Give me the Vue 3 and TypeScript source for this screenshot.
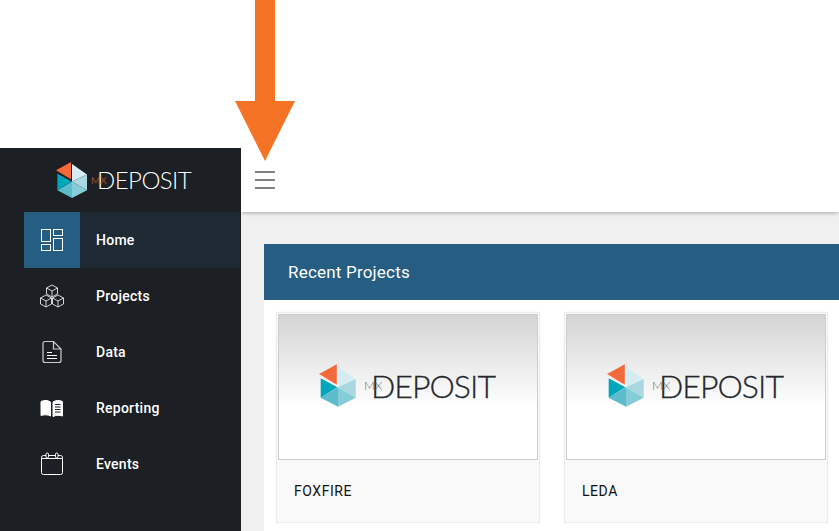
<script setup lang="ts">
const navItems = [
  { label: 'Home', icon: 'home', active: true },
  { label: 'Projects', icon: 'projects', active: false },
  { label: 'Data', icon: 'data', active: false },
  { label: 'Reporting', icon: 'reporting', active: false },
  { label: 'Events', icon: 'events', active: false },
]

const projects = ['FOXFIRE', 'LEDA']
</script>

<template>
  <div class="page">
    <svg class="arrow" width="60" height="161" viewBox="0 0 60 161">
      <path d="M20 0h20v101h20L30 161 0 101h20z" fill="#f47324" />
    </svg>

    <div class="top-space"></div>

    <div class="shell">
      <aside class="sidebar">
        <div class="brand">
          <svg class="hex" width="32" height="38" viewBox="0 0 32 38">
            <path d="M16 3l15 10.500-15 7z" fill="#d3edf2" />
            <path d="M31 13.500v15.800l-15-8.800z" fill="#a9d8e0" />
            <path d="M31 29.300L16 37V20.500z" fill="#85cdd8" />
            <path d="M1.400 29.300L16 37V20.500z" fill="#5cbccb" />
            <path d="M1.400 12.800v16.500L15.500 20.500z" fill="#00a6bb" />
            <path d="M0 9.200L15 1v17.300z" fill="#f4693a" />
          </svg>
          <span class="wordmark">
            <span class="mx mx-dark">MX</span>DEPOSIT
          </span>
        </div>

        <nav class="nav">
          <a v-for="item in navItems" :key="item.label" class="nav-item" :class="{ active: item.active }">
            <span class="nav-icon">
              <svg width="26" height="26" viewBox="0 0 26 26" fill="none" stroke="#fff" stroke-width="1">
                <template v-if="item.icon === 'home'">
                  <rect x="2.500" y="2.500" width="9" height="12" />
                  <rect x="14.500" y="2.500" width="9" height="6" />
                  <rect x="14.500" y="11.500" width="9" height="12" />
                  <rect x="2.500" y="17.500" width="9" height="6" />
                </template>
                <template v-else-if="item.icon === 'projects'">
                  <g stroke-width="0.800">
                    <path d="M13 2l5.500 3v6L13 14l-5.500-3V5zM7.500 5l5.500 3 5.500-3M13 8v6" />
                    <path d="M7 12l5.500 3v6L7 24l-5.500-3v-6zM1.500 15L7 18l5.500-3M7 18v6" />
                    <path d="M19 12l5.500 3v6L19 24l-5.500-3v-6zM13.500 15l5.500 3 5.500-3M19 18v6" />
                  </g>
                </template>
                <template v-else-if="item.icon === 'data'">
                  <path d="M6 2.500a2 2 0 0 0-2 2v17a2 2 0 0 0 2 2h14a2 2 0 0 0 2-2V10l-7.500-7.500zM14.500 2.500V10H22" stroke="#ccc" stroke-width="1.200" />
                  <path d="M8 13.500h5M8 16.500h10M8 19.500h10" stroke-width="1.200" />
                </template>
                <template v-else-if="item.icon === 'reporting'">
                  <path d="M2 6.500c3-1.500 7-1.500 9.500.5v14c-2.500-1.500-6.500-1.500-9.500-.5z" fill="#fff" stroke="#fff" />
                  <path d="M14 7c3-2 6.500-2 9.500-.5V21c-3-1-6.500-1-9.500.5z" fill="#fff" stroke="#fff" />
                  <path d="M16 9.500h5.500M16 12h5.500M16 14.500h5.500M16 17h5.500" stroke="#1c1f24" stroke-width="1.200" />
                </template>
                <template v-else>
                  <rect x="2.500" y="4.500" width="21" height="19" rx="2" />
                  <path d="M2.500 7.500h21" />
                  <rect x="7" y="2" width="2.500" height="5" rx="1.200" fill="#1c1f24" />
                  <rect x="16.500" y="2" width="2.500" height="5" rx="1.200" fill="#1c1f24" />
                </template>
              </svg>
            </span>
            <span class="nav-label">{{ item.label }}</span>
          </a>
        </nav>
      </aside>

      <div class="content">
        <header class="toolbar">
          <button class="menu-button" aria-label="Menu">
            <span></span><span></span><span></span>
          </button>
        </header>

        <main class="main">
          <section class="panel">
            <h2 class="panel-title">Recent Projects</h2>
            <div class="cards">
              <article v-for="name in projects" :key="name" class="card">
                <div class="card-image">
                  <svg class="hex" width="38" height="45" viewBox="0 0 32 38">
                    <path d="M16 3l15 10.500-15 7z" fill="#d3edf2" />
                    <path d="M31 13.500v15.800l-15-8.800z" fill="#a9d8e0" />
                    <path d="M31 29.300L16 37V20.500z" fill="#85cdd8" />
                    <path d="M1.400 29.300L16 37V20.500z" fill="#5cbccb" />
                    <path d="M1.400 12.800v16.500L15.500 20.500z" fill="#00a6bb" />
                    <path d="M0 9.200L15 1v17.300z" fill="#f4693a" />
                  </svg>
                  <span class="wordmark wordmark-large">
                    <span class="mx">MX</span>DEPOSIT
                  </span>
                </div>
                <div class="card-name">{{ name }}</div>
              </article>
            </div>
          </section>
        </main>
      </div>
    </div>
  </div>
</template>

<style>
html,
body {
  margin: 0;
  overflow: hidden;
}
</style>

<style scoped>
.page {
  position: relative;
  display: flex;
  flex-direction: column;
  height: 531px;
  overflow: hidden;
  background: #fff;
  font-family: Roboto, sans-serif;
}

.arrow {
  position: absolute;
  top: 0;
  left: 235px;
  z-index: 5;
}

.top-space {
  position: relative;
  z-index: 2;
  height: 148px;
  flex: none;
  background: #fff;
}

.shell {
  display: flex;
  flex: 1;
  min-height: 0;
}

.sidebar {
  position: relative;
  z-index: 1;
  width: 241px;
  flex: none;
  background: #1c1f24;
}

.brand {
  display: flex;
  align-items: center;
  gap: 9px;
  height: 64px;
  padding-left: 56px;
  box-sizing: border-box;
}

.hex {
  flex: none;
}

.wordmark {
  position: relative;
  font-family: Lato, sans-serif;
  font-weight: 300;
  font-size: 24px;
  letter-spacing: -0.55px;
  line-height: 1;
  color: #fff;
}

.mx {
  position: absolute;
  left: -6px;
  top: 7px;
  font-size: 10px;
  letter-spacing: 0;
  color: #555;
}

.mx-dark {
  font-weight: 400;
  color: #9a4f33;
}

.wordmark-large {
  font-size: 32px;
  letter-spacing: -0.95px;
  -webkit-text-stroke: 0.3px #23282d;
  color: #23282d;
}

.wordmark-large .mx {
  left: -7px;
  top: 10px;
  font-size: 12px;
  -webkit-text-stroke: 0;
  letter-spacing: 0;
  color: #666;
}

.nav {
  display: flex;
  flex-direction: column;
  padding-right: 1px;
}

.nav-item {
  display: flex;
  align-items: center;
  height: 56px;
  margin-left: 24px;
  color: #fff;
  font-size: 14px;
  font-weight: 500;
  letter-spacing: 0.25px;
}

.nav-item.active {
  background: #1e2933;
}

.nav-icon {
  display: flex;
  align-items: center;
  justify-content: center;
  width: 56px;
  height: 56px;
}

.nav-item.active .nav-icon {
  background: #265d82;
}

.nav-label {
  margin-left: 16px;
}

.content {
  display: flex;
  flex-direction: column;
  flex: 1;
  min-width: 0;
  background: #f0f0f0;
}

.toolbar {
  height: 64px;
  flex: none;
  display: flex;
  align-items: center;
  background: #fff;
  box-shadow: 0 2px 4px -1px rgba(0, 0, 0, 0.3);
  position: relative;
}

.menu-button {
  display: flex;
  flex-direction: column;
  gap: 6.5px;
  margin-left: 14px;
  padding: 0;
  width: 20px;
  border: none;
  background: none;
}

.menu-button span {
  display: block;
  height: 1.5px;
  background: #808080;
}

.main {
  padding: 32px 0 0 23px;
}

.panel {
  width: 600px;
  background: #fff;
}

.panel-title {
  margin: 0;
  height: 56px;
  padding-left: 24px;
  line-height: 56px;
  background: #265d82;
  color: #fff;
  font-size: 17px;
  font-weight: 400;
  letter-spacing: 0.2px;
}

.cards {
  display: flex;
  gap: 24px;
  padding: 12px 12px 20px;
}

.card {
  width: 264px;
  height: 211px;
  flex: none;
  box-sizing: border-box;
  padding: 1px 1px 0;
  border: 1px solid #ececec;
  background: #f9f9f9;
  box-shadow: 0 0 1px rgba(0, 0, 0, 0.1);
}

.card-image {
  display: flex;
  align-items: center;
  justify-content: center;
  gap: 14px;
  box-sizing: border-box;
  height: 146px;
  padding-right: 2px;
  padding-bottom: 3px;
  border: 1px solid #ccc;
  background: linear-gradient(#d4d4d4, #fff 64%);
}

.card-name {
  padding-left: 16px;
  line-height: 62px;
  font-size: 14px;
  letter-spacing: 0.55px;
  color: #111;
}
</style>
